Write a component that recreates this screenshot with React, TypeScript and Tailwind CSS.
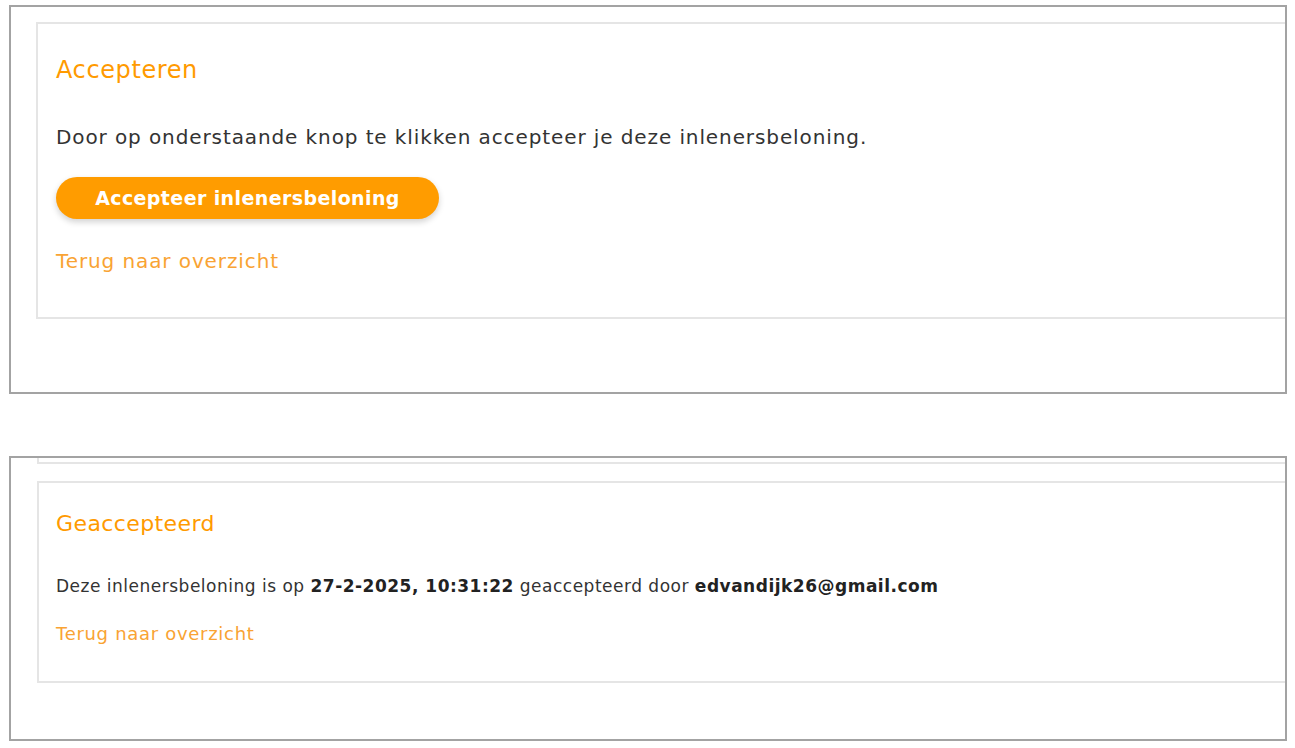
import React from "react";

const font = { fontFamily: '"DejaVu Sans", "Liberation Sans", sans-serif' };

export default function App() {
  return (
    <main className="min-h-screen bg-white pl-[9px] pr-[8px] pt-[5px] text-[#333]" style={font}>
      {/* Accepteren */}
      <section className="h-[389px] border-2 border-[#a3a3a3] pt-[15px] pl-[25px]">
        <div className="h-[297px] border-y-2 border-l-2 border-[#e5e5e5] pl-[18px] pt-[30px]">
          <h2 className="text-[24px] leading-[32px] tracking-[0.6px] text-[#ff9a00]">Accepteren</h2>
          <p className="mt-[38px] text-[20px] leading-[26px] tracking-[0.9px] text-[#333]">
            Door op onderstaande knop te klikken accepteer je deze inlenersbeloning.
          </p>
          <button className="mt-[27px] flex h-[42px] w-[383px] items-center justify-center rounded-full bg-[#ff9c00] text-[19px] font-bold tracking-[0.4px] text-white shadow-[0_3px_6px_rgba(0,0,0,0.18)]">
            Accepteer inlenersbeloning
          </button>
          <a className="mt-[29px] block text-[20px] leading-[26px] tracking-[0.9px] text-[#f9a333]">Terug naar overzicht</a>
        </div>
      </section>

      {/* Geaccepteerd */}
      <section className="mt-[62px] h-[285px] overflow-hidden border-2 border-[#a3a3a3] pl-[26px]">
        <div className="h-[6px] border-b-2 border-l-2 border-[#e5e5e5]" />
        <div className="mt-[17px] h-[202px] border-y-2 border-l-2 border-[#e5e5e5] pl-[17px] pt-[26px]">
          <h2 className="text-[22px] leading-[30px] tracking-[0.4px] text-[#ff9a00]">Geaccepteerd</h2>
          <p className="mt-[35px] text-[17px] leading-[24px] tracking-[0.5px] text-[#333]">
            Deze inlenersbeloning is op <b className="font-bold text-[#222]">27-2-2025, 10:31:22</b> geaccepteerd door{" "}
            <b className="font-bold text-[#222]">edvandijk26@gmail.com</b>
          </p>
          <a className="mt-[24px] block text-[18px] leading-[24px] tracking-[0.7px] text-[#f9a333]">Terug naar overzicht</a>
        </div>
      </section>
    </main>
  );
}
